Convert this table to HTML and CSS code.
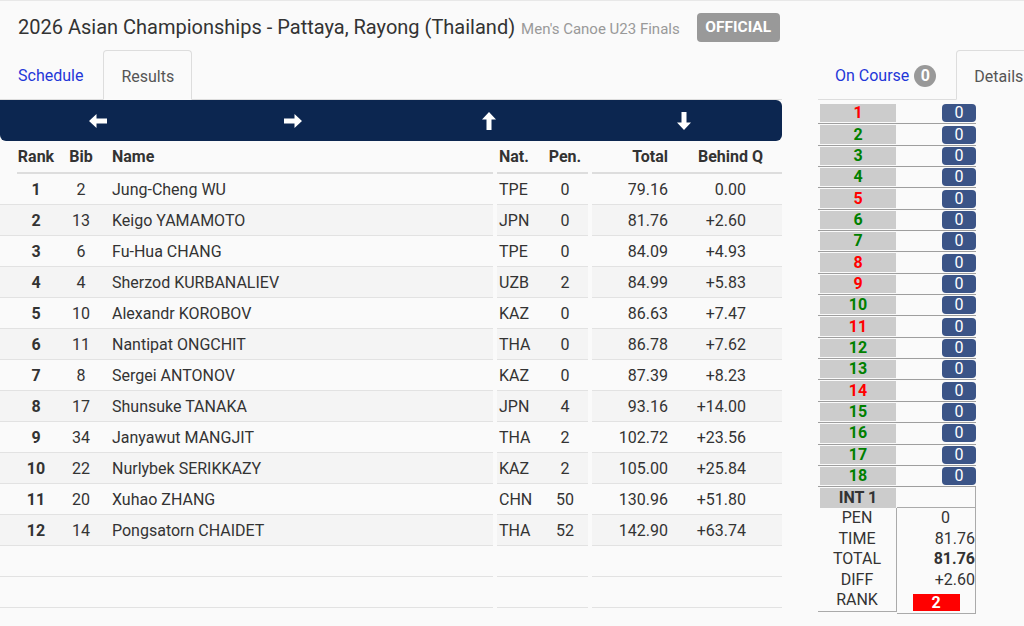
FILE: index.html
```html
<!DOCTYPE html>
<html>
<head>
<meta charset="utf-8">
<link rel="stylesheet" href="styles.css">
</head>
<body>
<header class="top">
  <h1 class="title">2026 Asian Championships - Pattaya, Rayong (Thailand) <small class="sub">Men's Canoe U23 Finals</small></h1>
  <span class="official">OFFICIAL</span>
</header>
<div class="layout">
  <main class="main">
    <nav class="tabs">
      <a class="tab">Schedule</a>
      <a class="tab active">Results</a>
    </nav>
    <div class="navbar">
      <div class="nav-cell"><svg width="18" height="14" viewBox="0 0 18 14"><polygon points="0,7 7.5,0 7.5,4.5 18,4.5 18,9.5 7.5,9.5 7.5,14" fill="#fff"/></svg></div>
      <div class="nav-cell"><svg width="18" height="14" viewBox="0 0 18 14"><polygon points="18,7 10.5,0 10.5,4.5 0,4.5 0,9.5 10.5,9.5 10.5,14" fill="#fff"/></svg></div>
      <div class="nav-cell"><svg width="14" height="18" viewBox="0 0 14 18"><polygon points="7,0 14,7.5 9.5,7.5 9.5,18 4.5,18 4.5,7.5 0,7.5" fill="#fff"/></svg></div>
      <div class="nav-cell"><svg width="14" height="18" viewBox="0 0 14 18"><polygon points="7,18 14,10.5 9.5,10.5 9.5,0 4.5,0 4.5,10.5 0,10.5" fill="#fff"/></svg></div>
    </div>
    <div class="results">
      <div class="row head">
        <div class="grp ga"><span class="c-rank">Rank</span><span class="c-bib">Bib</span><span class="c-name">Name</span></div>
        <div class="grp gb"><span class="c-nat">Nat.</span><span class="c-pen">Pen.</span></div>
        <div class="grp gc"><span class="c-total">Total</span><span class="c-behind">Behind Q</span></div>
      </div>
      <div class="row">
        <div class="grp ga"><span class="c-rank">1</span><span class="c-bib">2</span><span class="c-name">Jung-Cheng WU</span></div>
        <div class="grp gb"><span class="c-nat">TPE</span><span class="c-pen">0</span></div>
        <div class="grp gc"><span class="c-total">79.16</span><span class="c-behind">0.00</span></div>
      </div>
      <div class="row">
        <div class="grp ga"><span class="c-rank">2</span><span class="c-bib">13</span><span class="c-name">Keigo YAMAMOTO</span></div>
        <div class="grp gb"><span class="c-nat">JPN</span><span class="c-pen">0</span></div>
        <div class="grp gc"><span class="c-total">81.76</span><span class="c-behind">+2.60</span></div>
      </div>
      <div class="row">
        <div class="grp ga"><span class="c-rank">3</span><span class="c-bib">6</span><span class="c-name">Fu-Hua CHANG</span></div>
        <div class="grp gb"><span class="c-nat">TPE</span><span class="c-pen">0</span></div>
        <div class="grp gc"><span class="c-total">84.09</span><span class="c-behind">+4.93</span></div>
      </div>
      <div class="row">
        <div class="grp ga"><span class="c-rank">4</span><span class="c-bib">4</span><span class="c-name">Sherzod KURBANALIEV</span></div>
        <div class="grp gb"><span class="c-nat">UZB</span><span class="c-pen">2</span></div>
        <div class="grp gc"><span class="c-total">84.99</span><span class="c-behind">+5.83</span></div>
      </div>
      <div class="row">
        <div class="grp ga"><span class="c-rank">5</span><span class="c-bib">10</span><span class="c-name">Alexandr KOROBOV</span></div>
        <div class="grp gb"><span class="c-nat">KAZ</span><span class="c-pen">0</span></div>
        <div class="grp gc"><span class="c-total">86.63</span><span class="c-behind">+7.47</span></div>
      </div>
      <div class="row">
        <div class="grp ga"><span class="c-rank">6</span><span class="c-bib">11</span><span class="c-name">Nantipat ONGCHIT</span></div>
        <div class="grp gb"><span class="c-nat">THA</span><span class="c-pen">0</span></div>
        <div class="grp gc"><span class="c-total">86.78</span><span class="c-behind">+7.62</span></div>
      </div>
      <div class="row">
        <div class="grp ga"><span class="c-rank">7</span><span class="c-bib">8</span><span class="c-name">Sergei ANTONOV</span></div>
        <div class="grp gb"><span class="c-nat">KAZ</span><span class="c-pen">0</span></div>
        <div class="grp gc"><span class="c-total">87.39</span><span class="c-behind">+8.23</span></div>
      </div>
      <div class="row">
        <div class="grp ga"><span class="c-rank">8</span><span class="c-bib">17</span><span class="c-name">Shunsuke TANAKA</span></div>
        <div class="grp gb"><span class="c-nat">JPN</span><span class="c-pen">4</span></div>
        <div class="grp gc"><span class="c-total">93.16</span><span class="c-behind">+14.00</span></div>
      </div>
      <div class="row">
        <div class="grp ga"><span class="c-rank">9</span><span class="c-bib">34</span><span class="c-name">Janyawut MANGJIT</span></div>
        <div class="grp gb"><span class="c-nat">THA</span><span class="c-pen">2</span></div>
        <div class="grp gc"><span class="c-total">102.72</span><span class="c-behind">+23.56</span></div>
      </div>
      <div class="row">
        <div class="grp ga"><span class="c-rank">10</span><span class="c-bib">22</span><span class="c-name">Nurlybek SERIKKAZY</span></div>
        <div class="grp gb"><span class="c-nat">KAZ</span><span class="c-pen">2</span></div>
        <div class="grp gc"><span class="c-total">105.00</span><span class="c-behind">+25.84</span></div>
      </div>
      <div class="row">
        <div class="grp ga"><span class="c-rank">11</span><span class="c-bib">20</span><span class="c-name">Xuhao ZHANG</span></div>
        <div class="grp gb"><span class="c-nat">CHN</span><span class="c-pen">50</span></div>
        <div class="grp gc"><span class="c-total">130.96</span><span class="c-behind">+51.80</span></div>
      </div>
      <div class="row">
        <div class="grp ga"><span class="c-rank">12</span><span class="c-bib">14</span><span class="c-name">Pongsatorn CHAIDET</span></div>
        <div class="grp gb"><span class="c-nat">THA</span><span class="c-pen">52</span></div>
        <div class="grp gc"><span class="c-total">142.90</span><span class="c-behind">+63.74</span></div>
      </div>
      <div class="row empty"><div class="grp ga"></div><div class="grp gb"></div><div class="grp gc"></div></div>
      <div class="row empty"><div class="grp ga"></div><div class="grp gb"></div><div class="grp gc"></div></div>
      <div class="row empty"><div class="grp ga"></div><div class="grp gb"></div><div class="grp gc"></div></div>
    </div>
  </main>
  <aside class="side">
    <nav class="tabs side-tabs">
      <a class="tab">On Course <span class="count">0</span></a>
      <a class="tab active">Details</a>
    </nav>
    <div class="split">
      <div class="srow"><div class="sl red">1</div><div class="sr"><span class="pill">0</span></div></div>
      <div class="srow"><div class="sl green">2</div><div class="sr"><span class="pill">0</span></div></div>
      <div class="srow"><div class="sl green">3</div><div class="sr"><span class="pill">0</span></div></div>
      <div class="srow"><div class="sl green">4</div><div class="sr"><span class="pill">0</span></div></div>
      <div class="srow"><div class="sl red">5</div><div class="sr"><span class="pill">0</span></div></div>
      <div class="srow"><div class="sl green">6</div><div class="sr"><span class="pill">0</span></div></div>
      <div class="srow"><div class="sl green">7</div><div class="sr"><span class="pill">0</span></div></div>
      <div class="srow"><div class="sl red">8</div><div class="sr"><span class="pill">0</span></div></div>
      <div class="srow"><div class="sl red">9</div><div class="sr"><span class="pill">0</span></div></div>
      <div class="srow"><div class="sl green">10</div><div class="sr"><span class="pill">0</span></div></div>
      <div class="srow"><div class="sl red">11</div><div class="sr"><span class="pill">0</span></div></div>
      <div class="srow"><div class="sl green">12</div><div class="sr"><span class="pill">0</span></div></div>
      <div class="srow"><div class="sl green">13</div><div class="sr"><span class="pill">0</span></div></div>
      <div class="srow"><div class="sl red">14</div><div class="sr"><span class="pill">0</span></div></div>
      <div class="srow"><div class="sl green">15</div><div class="sr"><span class="pill">0</span></div></div>
      <div class="srow"><div class="sl green">16</div><div class="sr"><span class="pill">0</span></div></div>
      <div class="srow"><div class="sl green">17</div><div class="sr"><span class="pill">0</span></div></div>
      <div class="srow"><div class="sl green">18</div><div class="sr"><span class="pill">0</span></div></div>
      <div class="srow int"><div class="sl dark">INT 1</div><div class="sr boxed"></div></div>
      <div class="stats">
        <div class="labels">
          <div>PEN</div><div>TIME</div><div>TOTAL</div><div>DIFF</div><div>RANK</div>
        </div>
        <div class="values">
          <div class="v-pen">0</div>
          <div>81.76</div>
          <div class="strong">81.76</div>
          <div>+2.60</div>
          <div class="v-rank"><span class="rank-box">2</span></div>
        </div>
      </div>
    </div>
  </aside>
</div>
</body>
</html>
```
FILE: styles.css
```css
html, body {
  margin: 0;
  padding: 0;
}
body {
  background: #fafafa;
  font-family: Roboto, "Liberation Sans", sans-serif;
  color: #333;
  width: 1024px;
  height: 626px;
  overflow: hidden;
  border-top: 1px solid #e8e8e8;
  box-sizing: border-box;
}

.top {
  display: flex;
  align-items: center;
  height: 49px;
  padding: 3px 0 0 18px;
  box-sizing: border-box;
}
.title {
  margin: 0;
  font-size: 20px;
  font-weight: 400;
  color: #333;
  white-space: nowrap;
}
.sub {
  font-size: 15px;
  color: #999;
  margin-left: 1px;
}
.official {
  margin-left: 17px;
  background: #999;
  color: #fff;
  font-weight: 700;
  font-size: 15.5px;
  border-radius: 4px;
  height: 29px;
  line-height: 29px;
  width: 83px;
  text-align: center;
  flex: none;
}

.layout {
  display: flex;
  gap: 36px;
}
.main {
  width: 782px;
  flex: none;
}

.tabs {
  display: flex;
  height: 50px;
  border-bottom: 1px solid #ddd;
  box-sizing: border-box;
  padding-top: 2px;
}
.tab {
  display: flex;
  align-items: center;
  padding: 0 18px;
  margin-right: 2px;
  font-size: 16px;
  color: #1f37d8;
}
.tab.active {
  padding: 0 17px;
  margin-top: -2px;
  border: 1px solid #ddd;
  border-bottom-color: transparent;
  border-radius: 4px 4px 0 0;
  color: #555;
  background: #fafafa;
  margin-bottom: -1px;
  padding-top: 2px;
}

.navbar {
  display: grid;
  grid-template-columns: repeat(4, 1fr);
  height: 41px;
  background: #0c2650;
  border-radius: 0 6px 6px 6px;
}
.nav-cell {
  display: flex;
  align-items: center;
  justify-content: center;
}

.results {
  font-size: 16px;
}
.row {
  display: flex;
  gap: 4px;
  height: 31px;
}
.grp {
  display: flex;
  align-items: center;
  height: 100%;
  box-sizing: border-box;
  border-bottom: 1px solid #e2e2e2;
}
.row:nth-child(odd) .grp {
  background: #f4f4f4;
}
.row.empty .grp {
  background: transparent;
}
.ga {
  width: 493px;
  padding-left: 17px;
}
.gb {
  width: 91px;
}
.gc {
  width: 190px;
}
.c-rank {
  width: 38px;
  text-align: center;
  font-weight: 700;
}
.c-bib {
  width: 52px;
  text-align: center;
}
.c-name {
  padding-left: 5px;
  flex: 1;
}
.c-nat {
  width: 51px;
  padding-left: 2px;
  box-sizing: border-box;
}
.c-pen {
  width: 34px;
  text-align: center;
}
.c-total {
  width: 76px;
  text-align: right;
}
.c-behind {
  flex: 1;
  text-align: right;
  padding-right: 36px;
}

.row.head {
  height: 33px;
}
.row.head .grp {
  background: transparent;
  border-bottom: 2px solid #ddd;
  font-weight: 700;
}
.row.head .ga {
  margin-left: 17px;
  width: 476px;
  padding-left: 0;
}
.row.head .c-behind {
  padding-right: 19px;
}

.side {
  width: 206px;
  flex: none;
  overflow: hidden;
}
.side-tabs {
  width: 260px;
}
.side-tabs .tab:first-child {
  padding: 0 18px 0 17px;
}
.count {
  display: inline-block;
  width: 22px;
  height: 22px;
  line-height: 22px;
  border-radius: 50%;
  background: #999;
  color: #fff;
  font-weight: 700;
  text-align: center;
  margin-left: 5px;
  font-size: 16px;
}

.split {
  width: 158px;
  margin-top: 3px;
  font-size: 16px;
}
.srow {
  display: flex;
  height: 21.35px;
  box-sizing: border-box;
  padding: 1px 0;
  border-bottom: 1px solid #9e9e9e;
}
.sl {
  width: 79px;
  padding: 0 1px 0 2px;
  box-sizing: border-box;
  display: flex;
  background-clip: content-box;
  background-color: #cccccc;
  justify-content: center;
  align-items: center;
  font-weight: 700;
  line-height: 1;
}
.red { color: #ff0000; }
.green { color: #008000; }
.dark { color: #333; }
.sr {
  width: 79px;
  display: flex;
  justify-content: flex-end;
  align-items: center;
}
.pill {
  width: 34px;
  height: 18px;
  line-height: 18px;
  border-radius: 4px;
  background: #3b5487;
  color: #fff;
  text-align: center;
}
.srow.int {
  height: 21px;
  border-bottom: none;
  padding: 1px 0 0;
}
.sr.boxed {
  border-right: 1px solid #aaa;
  border-bottom: 1px solid #aaa;
  margin-top: -1px;
  box-sizing: border-box;
  height: 21px;
}

.stats {
  display: flex;
  align-items: flex-start;
}
.labels, .values {
  width: 79px;
  box-sizing: border-box;
  border-right: 1px solid #aaa;
  border-bottom: 1px solid #aaa;
}
.labels div {
  height: 20.5px;
  line-height: 20.5px;
  text-align: center;
}
.values {
  padding-bottom: 2px;
}
.values div {
  height: 20.5px;
  line-height: 20.5px;
  text-align: right;
}
.values .v-pen {
  padding-right: 25px;
}
.values .strong {
  font-weight: 700;
}
.values .v-rank {
  display: flex;
  justify-content: center;
  align-items: flex-end;
}
.rank-box {
  display: block;
  width: 47px;
  height: 17px;
  line-height: 17px;
  background: #ff0000;
  color: #fff;
  font-weight: 700;
  text-align: center;
}
```
